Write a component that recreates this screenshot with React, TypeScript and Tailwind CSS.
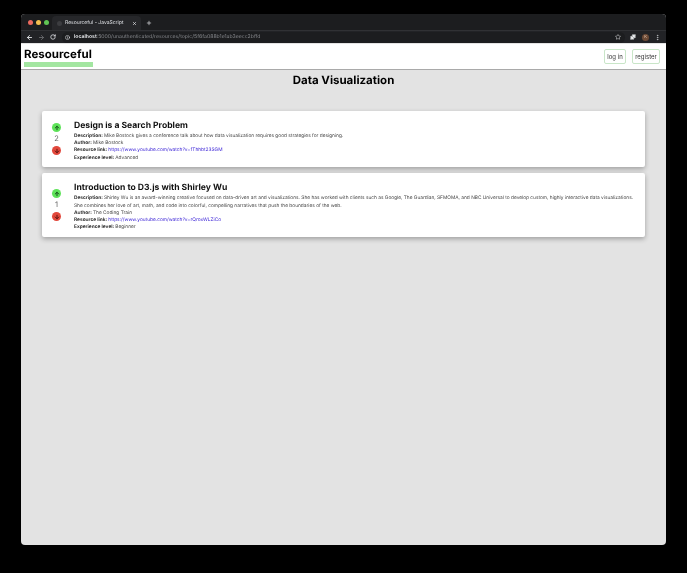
import { ArrowDown, ArrowLeft, ArrowRight, ArrowUp, Info, MoreVertical, Plus, Puzzle, RotateCw, Star, X } from "lucide-react";

const resources = [
  {
    votes: 2,
    title: "Design is a Search Problem",
    description: ["Mike Bostock gives a conference talk about how data visualization requires good strategies for designing."],
    author: "Mike Bostock",
    link: "https://www.youtube.com/watch?v=fThhbt23SGM",
    level: "Advanced",
  },
  {
    votes: 1,
    title: "Introduction to D3.js with Shirley Wu",
    description: [
      "Shirley Wu is an award-winning creative focused on data-driven art and visualizations. She has worked with clients such as Google, The Guardian, SFMOMA, and NBC Universal to develop custom, highly interactive data visualizations.",
      "She combines her love of art, math, and code into colorful, compelling narratives that push the boundaries of the web.",
    ],
    author: "The Coding Train",
    link: "https://www.youtube.com/watch?v=rQroxWLZiCo",
    level: "Beginner",
  },
];

function BrowserBar() {
  return (
    <div className="text-[#e8eaed]">
      <div className="flex h-[16px] items-end bg-[#1c1d1f] pl-[7px]">
        <div className="mb-[3px] flex gap-[3px] self-end pb-[2px]">
          <span className="size-[5px] rounded-full bg-[#ed6a5e]" />
          <span className="size-[5px] rounded-full bg-[#f5bf4f]" />
          <span className="size-[5px] rounded-full bg-[#61c554]" />
        </div>
        <div className="ml-[3px] flex h-[14px] w-[89px] items-center rounded-t-[4px] bg-[#26272a] pl-[5px] pr-[4px] pt-[1px]">
          <span className="size-[5px] rounded-full bg-[#3c3d40]" />
          <span className="ml-[3px] flex-1 whitespace-nowrap text-[5px] leading-none text-[#dfe1e5]">Resourceful - JavaScript</span>
          <X size={5} strokeWidth={3} />
        </div>
        <Plus size={6} strokeWidth={2.5} className="mb-[4px] ml-[5px]" />
      </div>
      <div className="flex h-[13px] items-center border-t border-[#303134] bg-[#222326] pl-[5px] pr-[5px]">
        <ArrowLeft size={7} strokeWidth={3} />
        <ArrowRight size={7} strokeWidth={3} className="ml-[5px] text-[#6b6d70]" />
        <RotateCw size={6} strokeWidth={3} className="ml-[5px]" />
        <div className="ml-[6px] flex h-[11px] flex-1 items-center rounded-full bg-[#1c1d1f] pl-[3px] pr-[4px]">
          <Info size={5} strokeWidth={2.5} />
          <span className="ml-[4px] flex-1 whitespace-nowrap pt-[1px] text-[5.15px] leading-none text-[#85878b]">
            <span className="font-semibold text-[#e8eaed]">localhost</span>:5000/unauthenticated/resources/topic/5f6fa088b1e1ab3eecc2bffd
          </span>
          <Star size={6} strokeWidth={2} />
        </div>
        <Puzzle size={6} fill="currentColor" className="ml-[5px]" />
        <span className="ml-[6px] flex size-[7px] items-center justify-center rounded-full bg-[#6b4a36] text-[4px] leading-none text-[#e9c9b0]">K</span>
        <MoreVertical size={7} strokeWidth={3} className="ml-[5px] text-[#b8babd]" />
      </div>
    </div>
  );
}

function NavBar() {
  return (
    <nav className="mt-[1px] flex h-[26px] items-start justify-between border-b border-[#a9a9a9] bg-white pl-[3px] pr-[6px]">
      <div className="w-[69px]">
        <div className="mt-[4px] text-[11.5px] font-bold leading-[13px] text-black">Resourceful</div>
        <div className="mt-[1px] h-[5px] bg-[#a3e6a1]" />
      </div>
      <div className="mt-[5px] flex gap-[6px]">
        <button className="h-[15px] w-[22px] rounded-[2px] border border-[#c9e6c8] text-[6px] leading-none text-[#333]">log in</button>
        <button className="h-[15px] w-[28px] rounded-[2px] border border-[#c9e6c8] text-[6px] leading-none text-[#333]">register</button>
      </div>
    </nav>
  );
}

function VoteButton({ up }: { up: boolean }) {
  return (
    <span className={`flex size-[9px] items-center justify-center rounded-full ${up ? "bg-[#5fe35a]" : "bg-[#e2483c]"}`}>
      {up ? <ArrowUp size={6} strokeWidth={4} className="text-[#14501a]" /> : <ArrowDown size={6} strokeWidth={4} className="text-[#5c1410]" />}
    </span>
  );
}

function ResourceCard({ votes, title, description, author, link, level }: (typeof resources)[number]) {
  return (
    <article className="flex rounded-[2px] bg-white pb-[5.5px] pl-[10px] pr-[4px] pt-[8px] shadow-[0_2px_5px_rgba(0,0,0,0.3)]">
      <div className="flex w-[9px] -translate-y-[1px] flex-col items-center self-center">
        <VoteButton up />
        <span className="my-[2px] text-[7.5px] leading-[10px] text-[#666]">{votes}</span>
        <VoteButton up={false} />
      </div>
      <div className="ml-[13px] flex-1">
        <h2 className="pt-[1px] text-[8.6px] font-bold leading-[12px] text-[#111]">{title}</h2>
        <div className="mt-[1px] text-[4.8px] leading-[7.2px] text-[#444]">
          <p>
            <b className="text-[#333]">Description: </b>
            {description[0]}
            {description[1] && <br />}
            {description[1]}
          </p>
          <p>
            <b className="text-[#333]">Author: </b>
            {author}
          </p>
          <p>
            <b className="text-[#333]">Resource link: </b>
            <a className="text-[#3a22d6]">{link}</a>
          </p>
          <p>
            <b className="text-[#333]">Experience level: </b>
            {level}
          </p>
        </div>
      </div>
    </article>
  );
}

export default function App() {
  return (
    <div className="h-[573px] bg-black px-[21px] pb-[28px] pt-[14px] blur-[0.3px] [font-family:Inter,'Liberation_Sans',sans-serif] [text-rendering:geometricPrecision]">
      <div className="flex h-full flex-col overflow-hidden rounded-[4px] bg-[#e3e3e3]">
        <BrowserBar />
        <NavBar />
        <main className="flex-1 px-[21px] pt-[2px]">
          <h1 className="text-center text-[11.5px] font-bold leading-[16px] text-black">Data Visualization</h1>
          <div className="mt-[23px] flex flex-col gap-[6px]">
            {resources.map((r) => (
              <ResourceCard key={r.title} {...r} />
            ))}
          </div>
        </main>
      </div>
    </div>
  );
}
